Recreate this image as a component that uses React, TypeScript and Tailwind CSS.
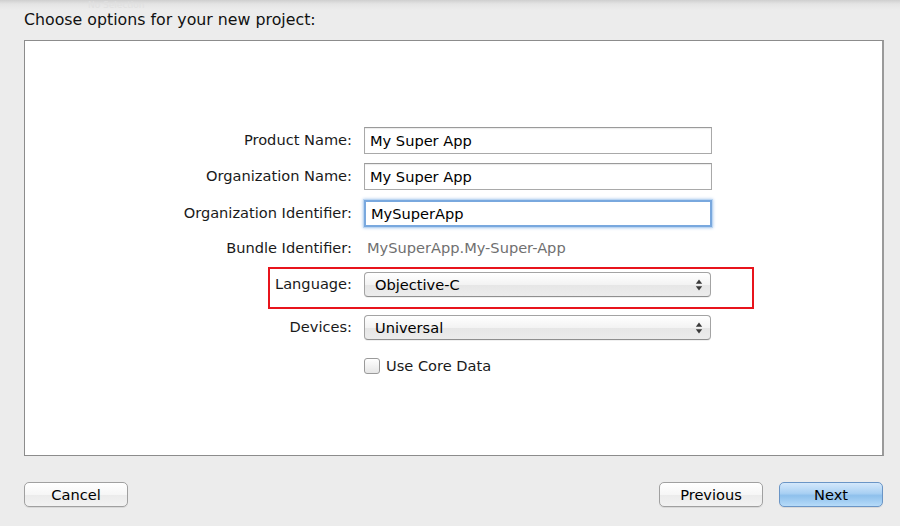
import React from "react";

const font = { fontFamily: '"DejaVu Sans", "Liberation Sans", sans-serif' };

function Label({ children }: { children: React.ReactNode }) {
  return (
    <div className="w-[328px] shrink-0 text-right text-[14.6px] text-[#1a1a1a] leading-none pr-[1px]">
      {children}
    </div>
  );
}

function TextField({ value, focused }: { value: string; focused?: boolean }) {
  return (
    <div
      className={
        "ml-[11px] w-[348px] h-[27px] flex items-center pl-[5px] text-[14.6px] text-black bg-white " +
        (focused
          ? "border-2 border-[#79a8de] shadow-[0_0_0_1px_#bcd6f2,0_0_3px_1px_#a9c8ec] pl-[4px]"
          : "border border-[#a9a9a9] border-t-[#9a9a9a] shadow-[inset_0_1px_1px_rgba(0,0,0,0.08)]")
      }
    >
      {value}
    </div>
  );
}

function Arrows() {
  return (
    <svg width="8" height="14" viewBox="0 0 8 14">
      <path d="M4 1.5 L7.2 5.8 L0.8 5.8 Z" fill="#3a3a3a" />
      <path d="M4 12.5 L7.2 8.2 L0.8 8.2 Z" fill="#3a3a3a" />
    </svg>
  );
}

function Popup({ value }: { value: string }) {
  return (
    <div className="ml-[11px] w-[347px] h-[25px] flex items-center justify-between pl-[10px] pr-[7px] rounded-[4px] border border-[#a3a3a3] border-b-[#8f8f8f] bg-[linear-gradient(to_bottom,#ffffff_0%,#f3f3f3_50%,#e6e6e6_51%,#ececec_100%)] shadow-[0_1px_0_rgba(0,0,0,0.06)] text-[14.6px] text-black">
      <span>{value}</span>
      <Arrows />
    </div>
  );
}

function Button({ children, primary }: { children: React.ReactNode; primary?: boolean }) {
  return (
    <div
      className={
        "w-[104px] h-[25px] flex items-center justify-center rounded-[5px] text-[14.6px] text-black border " +
        (primary
          ? "border-[#6a95c6] bg-[linear-gradient(to_bottom,#d4e8fb_0%,#a9d0f3_45%,#8ec0ec_55%,#b6dbf9_100%)]"
          : "border-[#a0a0a0] bg-[linear-gradient(to_bottom,#ffffff_0%,#f6f6f6_50%,#ebebeb_51%,#f2f2f2_100%)]") +
        " shadow-[0_1px_0_rgba(0,0,0,0.08)]"
      }
    >
      {children}
    </div>
  );
}

export default function App() {
  return (
    <div
      className="relative w-[900px] h-[526px] overflow-hidden bg-[#ececec] flex flex-col"
      style={font}
    >
      <div className="absolute left-0 top-0 w-full h-[10px] bg-[linear-gradient(to_bottom,#cfcfcf_0%,#e4e4e4_40%,#ececec_100%)]" />
      <div className="absolute left-[88px] top-0 h-[11px] text-[9px] leading-[11px] text-[#e0e0e0]">No Selection</div>

      <div className="relative pl-[24px] pt-[12px] h-[40px] text-[15.8px] text-[#111] leading-[16px]">
        Choose options for your new project:
      </div>

      <div className="ml-[24px] w-[860px] h-[416px] bg-white border border-[#8c8c8c] border-r-2 border-r-[#9a9a9a] flex flex-col pt-[86px]">
        <div className="flex items-center">
          <Label>Product Name:</Label>
          <TextField value="My Super App" />
        </div>
        <div className="flex items-center mt-[9px]">
          <Label>Organization Name:</Label>
          <TextField value="My Super App" />
        </div>
        <div className="flex items-center mt-[10px]">
          <Label>Organization Identifier:</Label>
          <TextField value="MySuperApp" focused />
        </div>
        <div className="flex items-center mt-[9px] h-[24px]">
          <Label>Bundle Identifier:</Label>
          <div className="ml-[14px] text-[14.6px] text-[#707070]">MySuperApp.My-Super-App</div>
        </div>
        <div className="relative flex items-center mt-[12px]">
          <Label>Language:</Label>
          <Popup value="Objective-C" />
          <div className="absolute left-[243px] top-[-5px] w-[486px] h-[42px] border-2 border-[#e8141c]" />
        </div>
        <div className="flex items-center mt-[18px]">
          <Label>Devices:</Label>
          <Popup value="Universal" />
        </div>
        <div className="flex items-center mt-[15px]">
          <div className="w-[328px] shrink-0" />
          <div className="ml-[11px] w-[16px] h-[16px] rounded-[3px] border border-[#9a9a9a] bg-[linear-gradient(to_bottom,#ffffff,#e6e6e6)]" />
          <div className="ml-[6px] text-[14.6px] text-[#1a1a1a]">Use Core Data</div>
        </div>
      </div>

      <div className="flex items-center mt-[26px] pl-[24px] pr-[17px]">
        <Button>Cancel</Button>
        <div className="flex-1" />
        <Button>Previous</Button>
        <div className="w-[16px]" />
        <Button primary>Next</Button>
      </div>
    </div>
  );
}
